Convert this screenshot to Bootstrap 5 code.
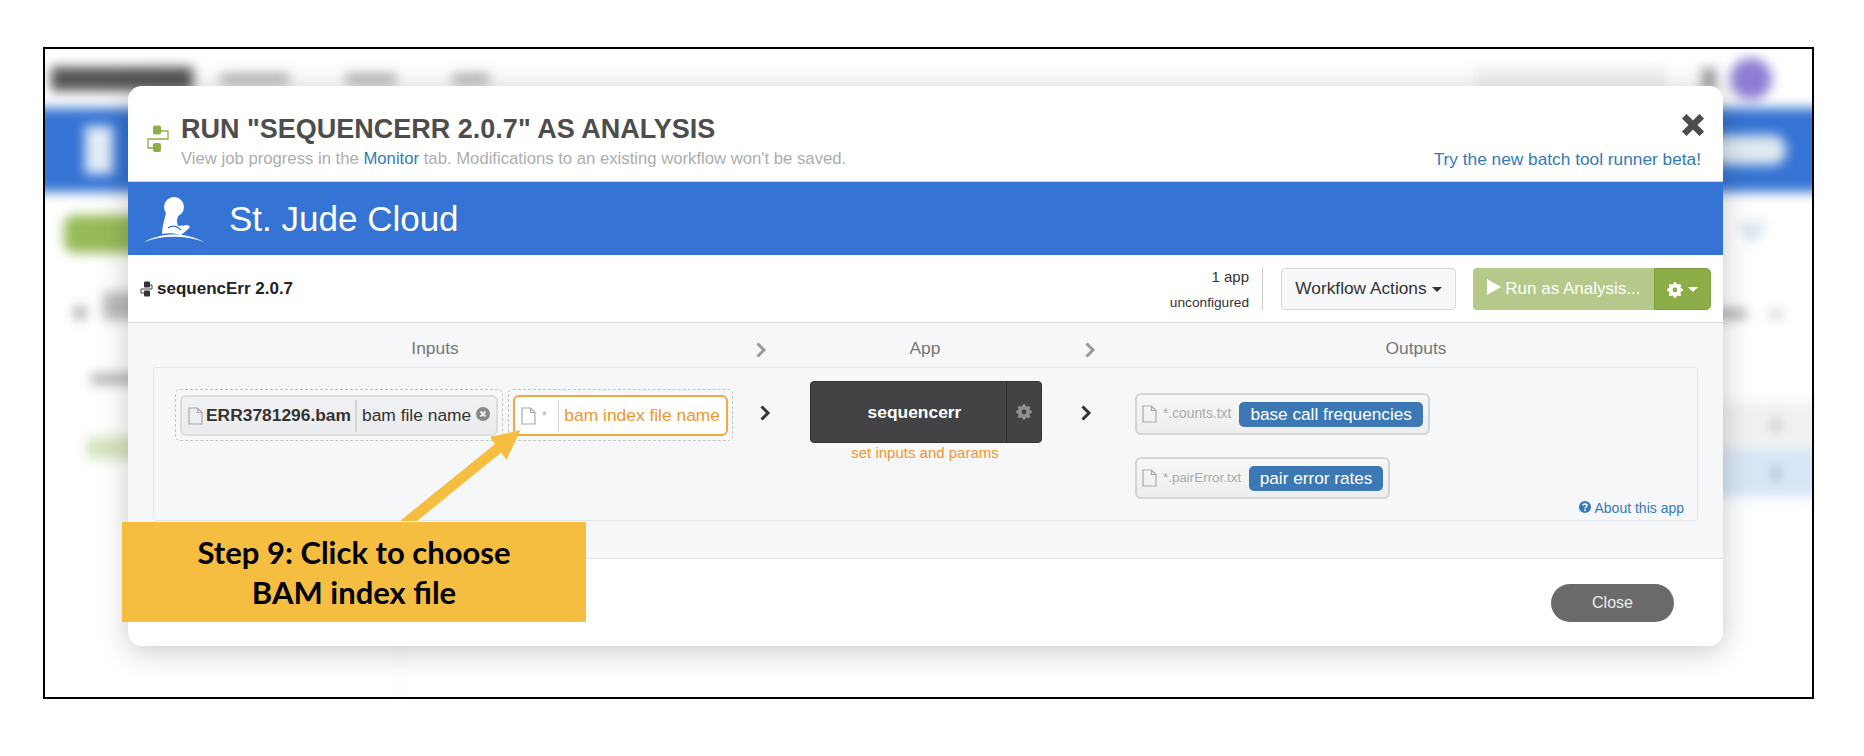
<!DOCTYPE html>
<html lang="en">
  <head>
    <meta charset="UTF-8" />
    <meta name="viewport" content="width=device-width, initial-scale=1.0" />
    <title>Run sequencErr as analysis</title>
    <link
      href="https://cdn.jsdelivr.net/npm/bootstrap@5.3.2/dist/css/bootstrap.min.css"
      rel="stylesheet"
    />
    <style>
      body {
        background: #fff;
        font-family: "Liberation Sans", Arial, sans-serif;
        height: 756px;
        overflow: hidden;
        padding: 47px 50px 0 43px;
      }
      .shot-frame {
        border: 2px solid #000;
        height: 652px;
        overflow: hidden;
        position: relative;
      }

      /* blurred page behind the modal, wider than the frame so the edges stay solid */
      .page-behind {
        filter: blur(6px);
        height: 100%;
        margin: 0 -12px;
      }
      .behind-nav { height: 59px; padding-left: 18px; }
      .behind-logo { background: #555; height: 24px; margin-right: 28px; width: 142px; }
      .behind-item { background: #aaa; height: 10px; margin-right: 57px; }
      .item-a { width: 68px; }
      .item-b { width: 50px; }
      .item-c { width: 36px; }
      .behind-search { background: #f2f2f2; height: 26px; margin-right: 36px; width: 190px; }
      .behind-dot { background: #999; height: 22px; margin-right: 14px; width: 14px; }
      .behind-avatar { background: #8f7dd2; border-radius: 50%; height: 42px; margin-right: 52px; width: 42px; }
      .behind-band { background: #3574d4; height: 84px; padding: 0 38px 0 50px; }
      .behind-t { background: #e4edf8; height: 48px; margin-left: 2px; width: 28px; }
      .behind-pill { background: #dfe9f1; border-radius: 14px; height: 30px; width: 74px; }
      .behind-green { background: #98ba58; border-radius: 10px; height: 38px; margin: 23px 0 0 31px; width: 130px; }
      .behind-side { border-right: 1px solid #ededed; width: 368px; }
      .behind-funnel {
        border-left: 16px solid transparent;
        border-right: 16px solid transparent;
        border-top: 24px solid #d6e3ee;
        height: 0;
        margin: 30px 56px 0 0;
        width: 0;
      }
      .behind-tools { height: 80px; }
      .behind-row { height: 48px; padding-right: 42px; }
      .row-titles { margin-top: 18px; }
      .behind-gray { background: #f1f1f1; margin-top: 63px; }
      .behind-blue { background: #d8e6f6; }
      .behind-spot { background: #ccc; border-radius: 50%; height: 16px; width: 12px; }
      .behind-spot-blue { background: #b6c6d8; }
      .behind-text { background: #aaa; height: 10px; width: 48px; }
      .behind-text-end { background: #ccc; height: 8px; margin: 0 0 0 24px; width: 12px; }
      .side-a { background: #aaa; border-radius: 50%; height: 14px; margin: 53px 0 0 40px; width: 14px; }
      .side-b { background: #bbb; height: 28px; margin: 39px 0 0 16px; width: 60px; }
      .side-name { background: #aaa; height: 10px; margin: 54px 0 0 58px; width: 60px; }
      .side-ok { background: #d5e3bd; height: 22px; margin: 53px 0 0 54px; width: 70px; }

      /* modal */
      .run-modal {
        background: #fff;
        border-radius: 14px;
        box-shadow: 0 5px 30px rgba(0, 0, 0, 0.22);
        height: 560px;
        left: 83px;
        overflow: hidden;
        position: absolute;
        top: 37px;
        width: 1595px;
      }
      .run-head {
        border-bottom: 1px solid #c9d3de;
        height: 96px;
        padding: 28px 22px 0 19px;
      }
      .head-icon { margin: 11px 12px 0 0; }
      .head-close { margin-right: -3px; }
      .run-title {
        color: #4d4d4d;
        font-size: 27px;
        font-weight: 700;
        line-height: 30px;
        margin: 0;
      }
      .run-sub { color: #adadad; font-size: 16.7px; line-height: 20px; margin-top: 5px; }
      .run-sub a, .beta-link, .about-link { color: #337ab7; text-decoration: none; }
      .beta-link { font-size: 17.3px; line-height: 20px; margin-bottom: 12px; margin-top: auto; }
      .run-band { background: #3574d4; color: #fff; font-size: 35px; height: 73px; padding: 2px 0 0 16px; }
      .run-band svg { margin-right: 25px; }
      .run-tools { border-bottom: 1px solid #ddd; height: 68px; padding: 12px 12px 0 12px; }
      .app-name { color: #222; font-size: 17px; font-weight: 700; margin-top: 9px; }
      .tool-count { border-right: 1px solid #ccc; color: #333; font-size: 15px; height: 43px; line-height: 20px; margin-right: 18px; padding-right: 13px; text-align: right; }
      .tool-count small { display: block; font-size: 13.7px; line-height: 24px; margin-top: 4px; }
      .btn.flow-btn {
        background: #f7f8f9;
        border: 1px solid #d6d8da;
        border-radius: 4px;
        color: #333;
        font-size: 17.3px;
        height: 42px;
        margin: 1px 17px 0 0;
        padding: 0;
        width: 175px;
      }
      .btn.run-btn {
        background: #b5ca8a;
        border: 0;
        border-radius: 4px 0 0 4px;
        color: #fff;
        font-size: 17px;
        height: 42px;
        margin-top: 1px;
        opacity: 1;
        padding: 0;
        width: 181px;
      }
      .btn.gear-btn {
        background: #8cad48;
        border: 1px solid #7f9f40;
        border-radius: 0 5px 5px 0;
        height: 42px;
        margin-top: 1px;
        padding: 0;
        width: 57px;
      }
      .tri-down {
        border-left: 5px solid transparent;
        border-right: 5px solid transparent;
        border-top: 5px solid currentColor;
        display: inline-block;
        margin-left: 5px;
        vertical-align: middle;
      }
      .run-body { background: #f6f7f8; border-bottom: 1px solid #e4e4e4; height: 236px; }
      .col-labels { color: #777; font-size: 17.4px; height: 44px; padding-top: 7px; }
      .col-inputs { width: 614px; }
      .col-mark { color: #999; width: 38px; }
      .col-app { width: 290px; }
      .col-mark-b { width: 39px; }
      .col-outputs { flex: 1; }
      .wf-panel { border: 1px solid #e4e6e8; border-radius: 3px; height: 154px; margin: 0 25px; padding-top: 21px; }
      .wf-row { height: 108px; padding-left: 21px; }
      .slot-dash {
        border: 1px dashed #c4c4c4;
        border-radius: 5px;
        height: 52px;
        margin-right: 5px;
        padding: 5px 4px;
      }
      .slot-pill {
        align-items: center;
        background: linear-gradient(#f0f1f2, #ebecee);
        border: 2px solid #dcdcdc;
        border-radius: 6px;
        display: flex;
        font-size: 17.4px;
        height: 41px;
        padding: 0 6px;
        white-space: nowrap;
      }
      .slot-one { color: #333; width: 318px; }
      .slot-one .page-mark { margin-right: 3px; }
      .slot-two { background: #fff; border-color: #f3a83f; color: #f0962e; width: 215px; }
      .slot-sep { background: #d5d5d5; height: 32px; width: 2px; }
      .sep-one { margin: 0 5px 0 4px; }
      .sep-two { margin-right: 6px; }
      .star-mark { color: #aaa; font-size: 12px; margin: 0 11px 0 6px; }
      .wf-mark { color: #333; margin-top: 16px; }
      .mark-a { margin-left: 21px; margin-right: 39px; }
      .mark-b { margin-left: 38px; margin-right: 43px; }
      .app-stack { margin-top: -8px; width: 232px; }
      .app-box {
        background: #434345;
        border: 1px solid #333;
        border-radius: 4px;
        color: #fff;
        font-size: 17.4px;
        font-weight: 700;
        height: 62px;
      }
      .app-main { flex: 1; padding-left: 12px; }
      .app-gear { border-left: 1px solid #2f2f30; color: #8f8f8f; width: 35px; }
      .set-label { color: #f0962e; font-size: 15px; line-height: 20px; margin-left: -2px; }
      .out-box {
        background: linear-gradient(#f7f7f7, #eeeeee);
        border: 2px solid #d3d3d3;
        border-radius: 6px;
        color: #aaa;
        font-size: 13.8px;
        height: 42px;
        padding: 0 5px;
      }
      .out-box svg { margin-right: 6px; }
      .out-one { margin-top: 4px; width: 295px; }
      .out-two { margin-top: 22px; width: 255px; }
      .out-ext-long { font-size: 13.4px; }
      .out-tag { background: #3c78b4; border-radius: 5px; color: #fff; font-size: 17.2px; height: 25px; line-height: 25px; text-align: center; }
      .about-link { font-size: 14px; line-height: 20px; padding: 1px 13px 0 0; text-align: right; }
      .run-foot { padding: 25px 49px 0 0; }
      .btn.close-btn {
        background: #6a6a6a;
        border: 0;
        border-radius: 19px;
        color: #eee;
        font-size: 16px;
        height: 38px;
        padding: 0;
        width: 123px;
      }

      /* annotation */
      .step-arrow { height: 100px; left: 355px; position: absolute; top: 381px; width: 185px; }
      .step-note {
        align-items: center;
        background: #f5be41;
        color: #000;
        display: flex;
        font-family: Lato, "Liberation Sans", sans-serif;
        font-size: 31px;
        font-weight: 700;
        height: 100px;
        justify-content: center;
        left: 77px;
        line-height: 40px;
        position: absolute;
        text-align: center;
        top: 473px;
        width: 464px;
      }
    </style>
  </head>

  <body>
    <svg width="0" height="0" class="d-block">
      <symbol id="gear" viewBox="0 0 16 16">
        <path fill-rule="evenodd" d="M9.405 1.05c-.413-1.4-2.397-1.4-2.81 0l-.1.34a1.464 1.464 0 0 1-2.105.872l-.31-.17c-1.283-.698-2.686.705-1.987 1.987l.169.311c.446.82.023 1.841-.872 2.105l-.34.1c-1.4.413-1.4 2.397 0 2.81l.34.1a1.464 1.464 0 0 1 .872 2.105l-.17.31c-.698 1.283.705 2.686 1.987 1.987l.311-.169a1.464 1.464 0 0 1 2.105.872l.1.34c.413 1.4 2.397 1.4 2.81 0l.1-.34a1.464 1.464 0 0 1 2.105-.872l.31.17c1.283.698 2.686-.705 1.987-1.987l-.169-.311a1.464 1.464 0 0 1 .872-2.105l.34-.1c1.4-.413 1.4-2.397 0-2.81l-.34-.1a1.464 1.464 0 0 1-.872-2.105l.17-.31c.698-1.283-.705-2.686-1.987-1.987l-.311.169a1.464 1.464 0 0 1-2.105-.872l-.1-.34zM8 10.4a2.4 2.4 0 1 1 0-4.8 2.4 2.4 0 0 1 0 4.8z" fill="currentColor" />
      </symbol>
      <symbol id="page" viewBox="0 0 15 18">
        <path d="M1 1h8.500L14 5.500V17H1zM9.500 1v4.500H14" fill="none" stroke="#aaa" stroke-width="1.200" />
      </symbol>
      <symbol id="chev" viewBox="0 0 12 16">
        <path d="M2.500 1.500 9 8l-6.500 6.500" fill="none" stroke="currentColor" stroke-width="3" />
      </symbol>
    </svg>

    <div class="shot-frame">
      <!-- page behind, out of focus -->
      <div class="page-behind d-flex flex-column">
        <div class="behind-nav d-flex align-items-center">
          <div class="behind-logo"></div>
          <div class="behind-item item-a"></div>
          <div class="behind-item item-b"></div>
          <div class="behind-item item-c"></div>
          <div class="ms-auto behind-search"></div>
          <div class="behind-dot"></div>
          <div class="behind-avatar"></div>
        </div>
        <div class="behind-band d-flex align-items-center justify-content-between">
          <div class="behind-t"></div>
          <div class="behind-pill"></div>
        </div>
        <div class="d-flex flex-grow-1">
          <div class="behind-side">
            <div class="behind-green"></div>
            <div class="d-flex">
              <div class="side-a"></div>
              <div class="side-b"></div>
            </div>
            <div class="side-name"></div>
            <div class="side-ok"></div>
          </div>
          <div class="flex-grow-1">
            <div class="behind-tools d-flex justify-content-end">
              <div class="behind-funnel"></div>
            </div>
            <div class="d-flex justify-content-end align-items-center behind-row row-titles">
              <div class="behind-text"></div>
              <div class="behind-text-end"></div>
            </div>
            <div class="behind-row behind-gray d-flex justify-content-end align-items-center">
              <div class="behind-spot"></div>
            </div>
            <div class="behind-row behind-blue d-flex justify-content-end align-items-center">
              <div class="behind-spot behind-spot-blue"></div>
            </div>
          </div>
        </div>
      </div>

      <!-- modal -->
      <div class="run-modal d-flex flex-column">
        <div class="run-head d-flex justify-content-between">
          <div class="d-flex">
            <svg width="22" height="28" viewBox="0 0 22 28" class="head-icon flex-shrink-0">
              <path d="M12 6h9v8H1v9h9" fill="none" stroke="#8cad48" stroke-width="1.300" />
              <rect x="6" y="0.500" width="8" height="9" rx="2" fill="#8cad48" />
              <rect x="6" y="18" width="8" height="9" rx="2" fill="#8cad48" />
            </svg>
            <div>
              <h1 class="run-title">RUN "SEQUENCERR 2.0.7" AS ANALYSIS</h1>
              <div class="run-sub">
                View job progress in the <a href="#">Monitor</a> tab. Modifications to an existing workflow won't be saved.
              </div>
            </div>
          </div>
          <div class="d-flex flex-column align-items-end">
            <svg width="22" height="22" viewBox="0 0 22 22" class="head-close">
              <path d="M4.500 4.500l13 13M17.500 4.500l-13 13" stroke="#4d4d4d" stroke-width="6.500" stroke-linecap="square" />
            </svg>
            <a class="beta-link" href="#">Try the new batch tool runner beta!</a>
          </div>
        </div>

        <div class="run-band d-flex align-items-center">
          <svg width="60" height="46" viewBox="0 0 60 46">
            <path d="M0 45C18 35 42 35 60 45 42 38 18 38 0 45z" fill="#fff" />
            <circle cx="30" cy="10" r="10" fill="#fff" />
            <path d="M18 37C18 30 20 24 22 16L35 18C32 22 33 26 34 29L44 28 46 30C44 33 40 35 37 38 30 36 24 36 18 37z" fill="#fff" />
            <path d="M24 31C28 28 33 29 37 33" fill="none" stroke="#3574d4" stroke-width="1.200" />
          </svg>
          St. Jude Cloud
        </div>

        <div class="run-tools d-flex">
          <div class="app-name d-flex align-items-center align-self-start">
            <svg width="13" height="16" viewBox="0 0 13 16" class="me-1">
              <path d="M6 4h6v4H1v4h5" fill="none" stroke="#444" stroke-width="1" />
              <rect x="4" y="0.500" width="6" height="6" rx="1" fill="#333" />
              <rect x="4" y="9.500" width="6" height="6" rx="1" fill="#333" />
            </svg>
            sequencErr 2.0.7
          </div>
          <div class="tool-count ms-auto">
            1 app
            <small>unconfigured</small>
          </div>
          <button class="btn flow-btn" type="button">Workflow Actions<span class="tri-down"></span></button>
          <button class="btn run-btn" type="button">
            <svg width="14" height="16" viewBox="0 0 14 16" class="align-text-top"><path d="M0 0l14 8-14 8z" fill="#fff" /></svg>
            Run as Analysis...
          </button>
          <button class="btn gear-btn text-white" type="button">
            <svg width="16" height="16"><use href="#gear" /></svg><span class="tri-down"></span>
          </button>
        </div>

        <div class="run-body">
          <div class="col-labels d-flex align-items-center text-center">
            <div class="col-inputs">Inputs</div>
            <div class="col-mark"><svg width="12" height="16"><use href="#chev" /></svg></div>
            <div class="col-app">App</div>
            <div class="col-mark col-mark-b"><svg width="12" height="16"><use href="#chev" /></svg></div>
            <div class="col-outputs">Outputs</div>
          </div>

          <div class="wf-panel d-flex flex-column">
            <div class="wf-row d-flex align-items-start">
              <div class="slot-dash">
                <div class="slot-pill slot-one">
                  <svg width="15" height="18" class="page-mark flex-shrink-0"><use href="#page" /></svg>
                  <strong>ERR3781296.bam</strong>
                  <span class="slot-sep sep-one"></span>
                  <span>bam file name</span>
                  <svg width="14" height="14" viewBox="0 0 14 14" class="ms-auto mb-1">
                    <circle cx="7" cy="7" r="7" fill="#888" />
                    <path d="M4.500 4.500l5 5M9.500 4.500l-5 5" stroke="#eee" stroke-width="2" />
                  </svg>
                </div>
              </div>
              <div class="slot-dash">
                <div class="slot-pill slot-two">
                  <svg width="15" height="18" class="flex-shrink-0"><use href="#page" /></svg>
                  <span class="star-mark">*</span>
                  <span class="slot-sep sep-two"></span>
                  <span>bam index file name</span>
                </div>
              </div>
              <svg width="12" height="16" class="wf-mark mark-a flex-shrink-0"><use href="#chev" /></svg>
              <div class="app-stack text-center flex-shrink-0">
                <div class="app-box d-flex">
                  <div class="app-main d-flex align-items-center justify-content-center">sequencerr</div>
                  <div class="app-gear d-flex align-items-center justify-content-center">
                    <svg width="16" height="16"><use href="#gear" /></svg>
                  </div>
                </div>
                <div class="set-label">set inputs and params</div>
              </div>
              <svg width="12" height="16" class="wf-mark mark-b flex-shrink-0"><use href="#chev" /></svg>
              <div>
                <div class="out-box out-one d-flex align-items-center">
                  <svg width="15" height="18" class="flex-shrink-0"><use href="#page" /></svg>
                  <span class="me-2">*.counts.txt</span>
                  <span class="out-tag flex-grow-1">base call frequencies</span>
                </div>
                <div class="out-box out-two d-flex align-items-center">
                  <svg width="15" height="18" class="flex-shrink-0"><use href="#page" /></svg>
                  <span class="me-2 out-ext-long">*.pairError.txt</span>
                  <span class="out-tag flex-grow-1">pair error rates</span>
                </div>
              </div>
            </div>
            <a class="about-link" href="#">
              <svg width="12" height="12" viewBox="0 0 12 12" class="align-baseline">
                <circle cx="6" cy="6" r="6" fill="#337ab7" />
                <path d="M4 4.500C4 2.500 8 2.500 8 4.500 8 6 6 6 6 7.500" fill="none" stroke="#fff" stroke-width="1.500" />
                <rect x="5.200" y="8.500" width="1.600" height="1.600" fill="#fff" />
              </svg>
              About this app
            </a>
          </div>
        </div>

        <div class="run-foot d-flex justify-content-end">
          <button class="btn close-btn" type="button">Close</button>
        </div>
      </div>

      <!-- annotation on top of the screenshot -->
      <svg class="step-arrow" viewBox="406 431 185 100">
        <path d="M406 522 501 444.900 496 438 526.600 431 512.500 461 507.200 453.600 423 522z" fill="#f5be41" />
      </svg>
      <div class="step-note">Step 9: Click to choose<br />BAM index file</div>
    </div>

    <script src="https://cdn.jsdelivr.net/npm/bootstrap@5.3.2/dist/js/bootstrap.bundle.min.js"></script>
  </body>
</html>
